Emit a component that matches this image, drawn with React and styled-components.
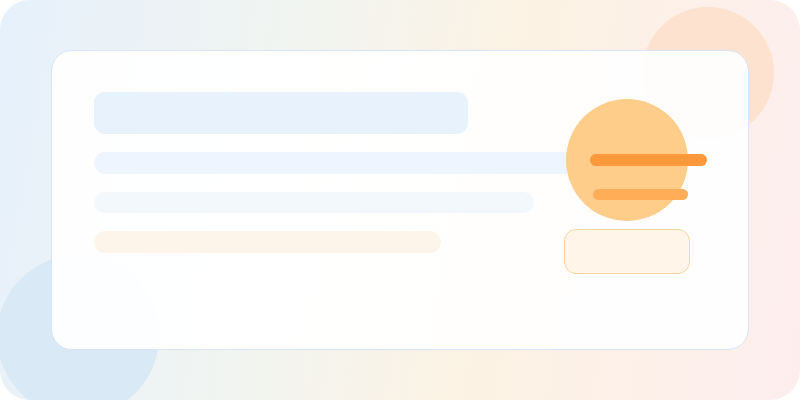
import React from 'react';
import styled, { createGlobalStyle } from 'styled-components';

const GlobalStyle = createGlobalStyle`
  html, body {
    margin: 0;
    padding: 0;
    background: #fff;
    font-family: 'Inter', 'Liberation Sans', sans-serif;
  }
`;

const Frame = styled.div`
  position: relative;
  width: 800px;
  height: 400px;
  box-sizing: border-box;
  padding: 50px 51px;
  border-radius: 30px;
  overflow: hidden;
  background: linear-gradient(100deg, #e6f1fc 0%, #f1f4f0 35%, #fcf2e3 62%, #fdeeee 100%);
`;

// soft blobs behind the card
const Blob = styled.div`
  position: absolute;
  border-radius: 50%;
  width: ${(p) => p.size}px;
  height: ${(p) => p.size}px;
  left: ${(p) => p.x}px;
  top: ${(p) => p.y}px;
  background: ${(p) => p.color};
`;

const Card = styled.div`
  position: relative;
  z-index: 1;
  height: 100%;
  box-sizing: border-box;
  display: flex;
  align-items: flex-start;
  padding: 41px 42px;
  border: 1px solid #d7e5f6;
  border-radius: 21px;
  background: rgba(255, 255, 255, 0.93);
  overflow: hidden;

  &::before {
    content: '';
    position: absolute;
    inset: 0;
    background: linear-gradient(
      112deg,
      rgba(255, 255, 255, 0) 30%,
      rgba(255, 255, 255, 0.7) 42%,
      rgba(255, 255, 255, 0) 55%
    );
    pointer-events: none;
  }
`;

const Lines = styled.div`
  position: relative;
  display: flex;
  flex-direction: column;
  gap: 18px;
  width: 482px;
`;

const Line = styled.div`
  width: ${(p) => p.w}px;
  height: ${(p) => p.h}px;
  border-radius: ${(p) => (p.h > 30 ? 11 : p.h / 2)}px;
  background: ${(p) => p.color};
`;

const Side = styled.div`
  position: relative;
  display: flex;
  flex-direction: column;
  align-items: center;
  gap: 8px;
  width: 126px;
  margin-left: -12px;
  padding-top: 7px;
`;

const Badge = styled.div`
  position: relative;
  width: 122px;
  height: 122px;
  border-radius: 50%;
  background: #fecd8a;
`;

const Stroke = styled.div`
  position: absolute;
  left: ${(p) => p.x}px;
  top: ${(p) => p.y}px;
  width: ${(p) => p.w}px;
  height: ${(p) => p.h}px;
  border-radius: 6px;
  background: ${(p) => p.color};
`;

const Button = styled.div`
  width: 126px;
  height: 45px;
  box-sizing: border-box;
  border: 1px solid #f6d4a4;
  border-radius: 12px;
  background: #fff5e8;
`;

export default function App() {
  return (
    <>
      <GlobalStyle />
      <Frame>
        <Blob size={132} x={642} y={7} color="#fde2cf" />
        <Blob size={162} x={-3} y={255} color="#d9e9f5" />
        <Card>
          <Lines>
            <Line w={374} h={42} color="#e8f2fd" />
            <Line w={482} h={22} color="#eef5fe" />
            <Line w={440} h={21} color="#f3f8fd" />
            <Line w={347} h={22} color="#fef5ea" />
          </Lines>
          <Side>
            <Badge>
              <Stroke x={24} y={55} w={117} h={12} color="#ff993b" />
              <Stroke x={27} y={90} w={95} h={11} color="#ffae57" />
            </Badge>
            <Button />
          </Side>
        </Card>
      </Frame>
    </>
  );
}
